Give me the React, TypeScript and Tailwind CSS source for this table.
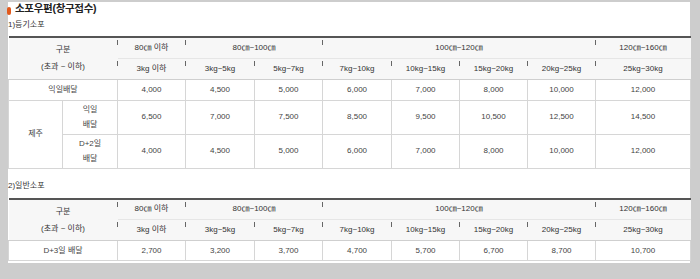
import React from "react";

const sizes = ["80㎝ 이하", "80㎝~100㎝", "100㎝~120㎝", "120㎝~160㎝"];
const sizeSpans = [1, 2, 4, 1];
const weights = [
  "3kg 이하",
  "3kg~5kg",
  "5kg~7kg",
  "7kg~10kg",
  "10kg~15kg",
  "15kg~20kg",
  "20kg~25kg",
  "25kg~30kg",
];

const nextDay = ["4,000", "4,500", "5,000", "6,000", "7,000", "8,000", "10,000", "12,000"];
const jejuNextDay = ["6,500", "7,000", "7,500", "8,500", "9,500", "10,500", "12,500", "14,500"];
const jejuD2 = ["4,000", "4,500", "5,000", "6,000", "7,000", "8,000", "10,000", "12,000"];
const normalD3 = ["2,700", "3,200", "3,700", "4,700", "5,700", "6,700", "8,700", "10,700"];

const font = { fontFamily: '"Liberation Sans", "Noto Sans CJK KR", sans-serif' };

function Tick() {
  return <span className="absolute left-[-1px] top-[2px] h-[5px] w-px bg-[#666]" />;
}

function Cols() {
  return (
    <colgroup>
      <col className="w-[54px]" />
      <col className="w-[55px]" />
      <col className="w-[68px]" />
      <col className="w-[69px]" />
      <col className="w-[68px]" />
      <col className="w-[69px]" />
      <col className="w-[68px]" />
      <col className="w-[68px]" />
      <col className="w-[68px]" />
      <col className="w-[95px]" />
    </colgroup>
  );
}

function Head() {
  return (
    <thead>
      <tr className="h-[21px] bg-[#f7f7f7]">
        <td colSpan={2} rowSpan={2} className="text-center text-[#333] leading-[17px] border-b border-[#cfcfcf]">
          구분
          <br />
          (초과 ~ 이하)
        </td>
        {sizes.map((s, i) => (
          <td
            key={s}
            colSpan={sizeSpans[i]}
            className="relative text-center text-[#333] border-b border-[#e6e6e6]"
          >
            <Tick />
            {s}
          </td>
        ))}
      </tr>
      <tr className="h-[21px] bg-[#f7f7f7]">
        {weights.map((w) => (
          <td key={w} className="relative text-center text-[#333] border-b border-[#cfcfcf]">
            <Tick />
            {w}
          </td>
        ))}
      </tr>
    </thead>
  );
}

function Cells({ values }: { values: string[] }) {
  return (
    <>
      {values.map((v, i) => (
        <td key={i} className="text-center border border-[#d6d6d6]">
          {v}
        </td>
      ))}
    </>
  );
}

export default function App() {
  return (
    <div className="h-[279px] bg-[#cdcdcd] pt-[9px] pl-[8px] pr-[10px] text-[8px] text-[#444]" style={font}>
      <div className="h-[261px] bg-white">
        {/* Title */}
        <div className="-mt-[7px] flex h-[14px] items-center">
          <span className="ml-[-1px] mt-[4px] h-[8px] w-[4px] rounded-full bg-[#e2591c]" />
          <span className="ml-[4px] text-[10.5px] font-bold tracking-[-0.3px] text-[#222]">
            소포우편(창구접수)
          </span>
        </div>

        {/* 등기소포 */}
        <div className="mt-[3px] h-[12px] leading-[12px] text-[#333]">1)등기소포</div>
        <table className="mt-[5px] w-full table-fixed border-collapse border-t-2 border-[#555]">
          <Cols />
          <Head />
          <tbody>
            <tr className="h-[21px]">
              <td colSpan={2} className="text-center border border-[#d6d6d6]">
                익일배달
              </td>
              <Cells values={nextDay} />
            </tr>
            <tr className="h-[34px]">
              <td rowSpan={2} className="text-center border border-[#d6d6d6]">
                제주
              </td>
              <td className="text-center leading-[15px] border border-[#d6d6d6]">
                익일
                <br />
                배달
              </td>
              <Cells values={jejuNextDay} />
            </tr>
            <tr className="h-[34px]">
              <td className="text-center leading-[15px] border border-[#d6d6d6]">
                D+2일
                <br />
                배달
              </td>
              <Cells values={jejuD2} />
            </tr>
          </tbody>
        </table>

        {/* 일반소포 */}
        <div className="mt-[11px] h-[12px] leading-[12px] text-[#333]">2)일반소포</div>
        <table className="mt-[6px] w-full table-fixed border-collapse border-t-2 border-[#555]">
          <Cols />
          <Head />
          <tbody>
            <tr className="h-[20px]">
              <td colSpan={2} className="text-center border border-[#d6d6d6]">
                D+3일 배달
              </td>
              <Cells values={normalD3} />
            </tr>
          </tbody>
        </table>
      </div>
    </div>
  );
}
